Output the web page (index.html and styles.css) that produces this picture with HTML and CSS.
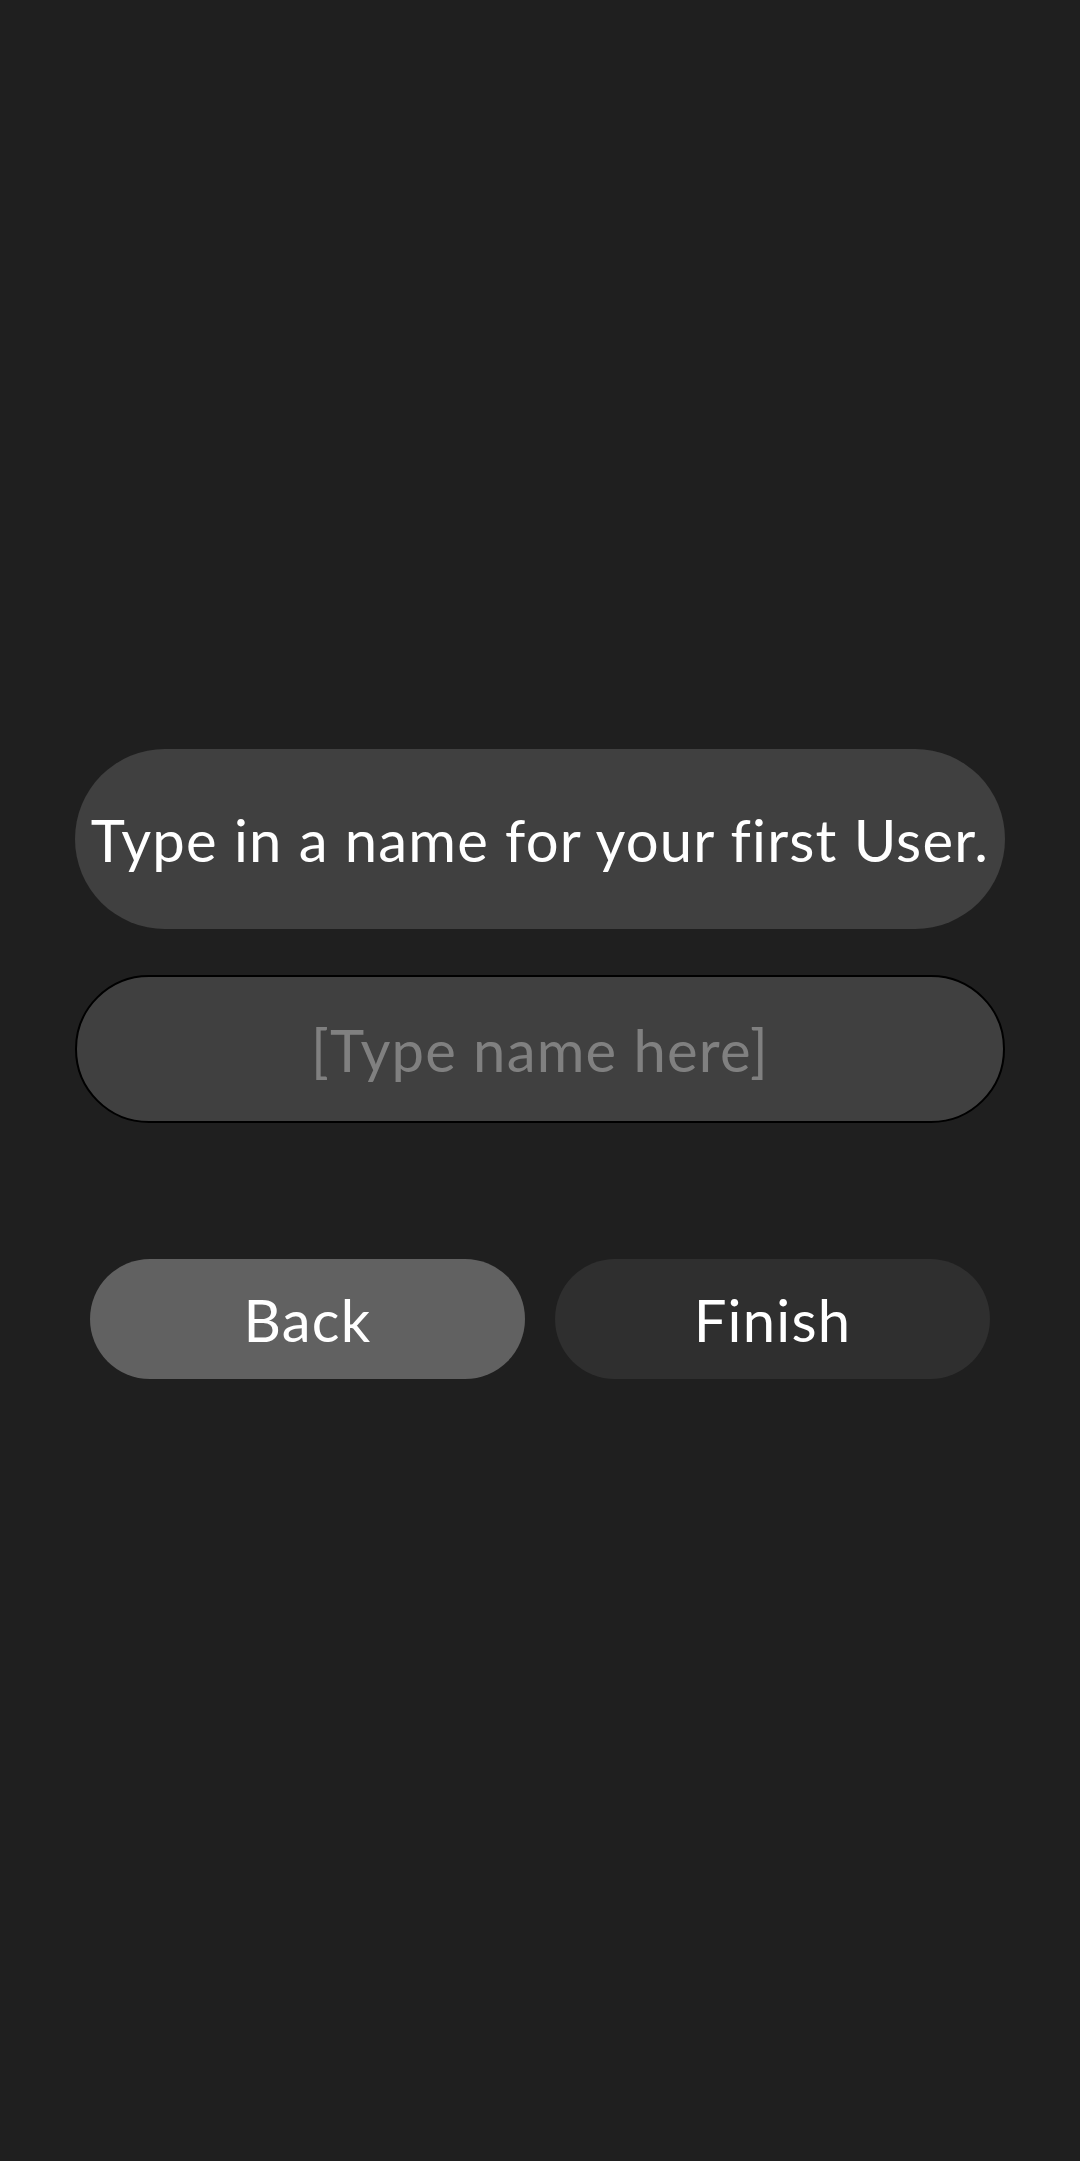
FILE: index.html
```html
<!DOCTYPE html>
<html>
<head>
<meta charset="utf-8">
<link rel="stylesheet" href="styles.css">
</head>
<body>
<main class="screen">
  <div class="prompt">Type in a name for your first User.</div>
  <input class="name-input" type="text" placeholder="[Type name here]">
  <div class="actions">
    <button class="btn btn-back">Back</button>
    <button class="btn btn-finish">Finish</button>
  </div>
</main>
</body>
</html>
```
FILE: styles.css
```css
html, body {
  margin: 0;
  padding: 0;
  background: #1f1f1f;
}
.screen {
  box-sizing: border-box;
  width: 1080px;
  height: 2161px;
  padding: 749px 75px 0 75px;
  display: flex;
  flex-direction: column;
  font-family: Lato, "Noto Sans", sans-serif;
  letter-spacing: 1.2px;
}
.prompt {
  height: 180px;
  border-radius: 90px;
  background: #404040;
  color: #ffffff;
  font-size: 58px;
  display: flex;
  align-items: center;
  justify-content: center;
  white-space: nowrap;
}
.name-input {
  box-sizing: border-box;
  margin-top: 46px;
  height: 148px;
  width: 100%;
  border: 2px solid #000000;
  border-radius: 74px;
  background: #404040;
  color: #ffffff;
  font-family: inherit;
  letter-spacing: inherit;
  font-size: 58px;
  text-align: center;
  outline: none;
  padding: 0 20px;
}
.name-input::placeholder {
  color: #808080;
  opacity: 1;
}
.actions {
  margin-top: 136px;
  padding: 0 15px;
  display: flex;
  gap: 30px;
}
.btn {
  flex: 1;
  height: 120px;
  border: none;
  border-radius: 60px;
  color: #ffffff;
  font-family: inherit;
  letter-spacing: inherit;
  font-size: 58px;
  padding: 0;
}
.btn-back {
  background: #616161;
}
.btn-finish {
  background: #2f2f2f;
}
```
